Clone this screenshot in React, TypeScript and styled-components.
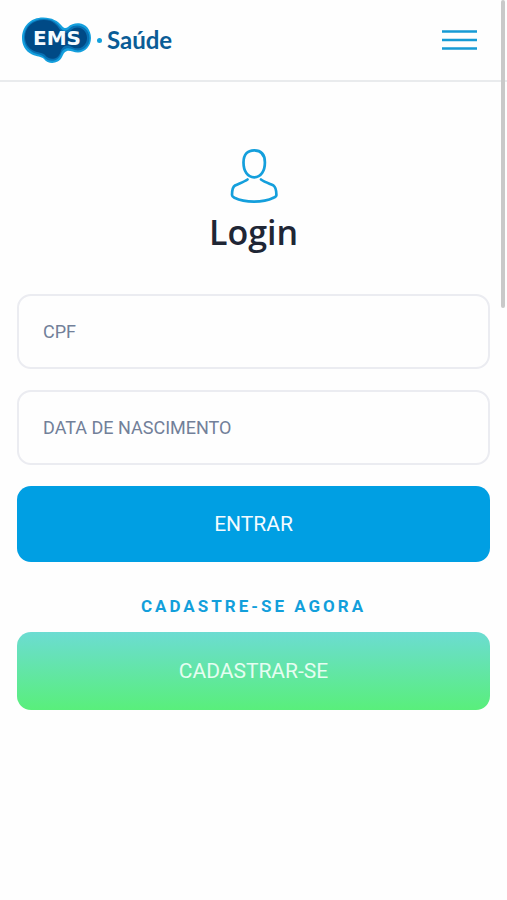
import React from "react";
import styled, { createGlobalStyle } from "styled-components";

const GlobalStyle = createGlobalStyle`
  *, *::before, *::after { box-sizing: border-box; }
  body {
    margin: 0;
    background: #fefefe;
    color: #1f2635;
    font-family: Roboto, "Liberation Sans", sans-serif;
  }
`;

const Header = styled.header`
  display: flex;
  align-items: center;
  justify-content: space-between;
  height: 82px;
  padding: 0 30px 0 20px;
  border-bottom: 2px solid #e9ebed;
`;

const Brand = styled.a`
  display: flex;
  align-items: center;
  gap: 5px;
  color: #0a5c96;
  font-family: Lato, "Liberation Sans", sans-serif;
  font-size: 24px;
  line-height: 32px;
  font-weight: 700;
  text-decoration: none;
`;

const BrandDot = styled.span`
  width: 5px;
  height: 5px;
  border-radius: 50%;
  background: #12a0dc;
`;

const MenuButton = styled.button`
  display: flex;
  padding: 0;
  border: 0;
  background: none;
  cursor: pointer;
`;

const Main = styled.main`
  display: flex;
  flex-direction: column;
  padding: 66px 17px 0;
`;

const Title = styled.h1`
  display: flex;
  flex-direction: column;
  align-items: center;
  gap: 4px;
  margin: 0 0 38px;
  font-family: "Open Sans", "Noto Sans", sans-serif;
  font-size: 34px;
  line-height: 48px;
  font-weight: 600;
`;

const Form = styled.form`
  display: flex;
  flex-direction: column;
  gap: 21px;
`;

const Field = styled.input`
  width: 100%;
  height: 75px;
  padding: 0 24px;
  border: 2px solid #ebecf1;
  border-radius: 14px;
  background: #fefefe;
  color: #1f2635;
  font-family: inherit;
  font-size: 18px;
  line-height: 24px;

  &::placeholder {
    color: #728099;
    opacity: 1;
  }
`;

const ActionButton = styled.button<{ $tone: "primary" | "signup" }>`
  width: 100%;
  height: ${({ $tone }) => ($tone === "primary" ? "76px" : "78px")};
  padding: 0;
  border: 0;
  border-radius: 14px;
  background: ${({ $tone }) =>
    $tone === "primary" ? "#009fe3" : "linear-gradient(#6cdcd2, #59ef7b)"};
  color: ${({ $tone }) => ($tone === "primary" ? "#f4fbff" : "#e6fdf1")};
  font-family: inherit;
  font-size: 21px;
  line-height: 28px;
  cursor: pointer;
`;

const SignupHeading = styled.h2`
  margin: 32px 0 14px;
  color: #129fdb;
  font-size: 17px;
  line-height: 24px;
  font-weight: 700;
  letter-spacing: 3px;
  text-align: center;
`;

const ScrollThumb = styled.div`
  position: fixed;
  top: 0;
  right: 2px;
  width: 4px;
  height: 308px;
  border-radius: 2px;
  background: #c9c9c9;
`;

const LogoText = styled.text`
  fill: #f5fbff;
  font-family: "DejaVu Sans", sans-serif;
  font-size: 20px;
  font-weight: 700;
`;

function EmsLogo() {
  return (
    <svg width="72" height="48" viewBox="0 0 72 48" role="img" aria-label="EMS">
      <path
        d="M23 1.5C32 1.500 38 5 42 10C44 12.500 46 12.500 48 11C51 8 55 7 59 7.300C66 8 71 14 71 22C71 30 65 36.500 58 36.500C53 36.500 50 34 47 35C44 36 43.500 38 42 41C38 48.500 28 48.500 24 43C21 40 17 41 12 38.500C5 35 2 29 2 22C2 10 11 1.500 23 1.500Z"
        fill="#149fdd"
      />
      <path
        d="M24 3C33 3 38 8 41 12.500C44 16 47 15 50 12C58 6 69.500 12 69.500 22C69.500 32 60 37 52 33C46 31 42 34 41 38C38 46 29 47 24 41C21 38 18 39 13 36.500C7 33 4 28 4 21.500C4 11 12 3 24 3Z"
        fill="#0871b4"
      />
      <path
        d="M24 4C33 4 37 9 40 14C43 18 48 17.500 51 14C58 8 67 13.500 67 22C67 31 58 35 51 30.500C46 28 42 31 40.500 36C38 44.500 29 44.500 25 39C22 36 18 37 14 35C8 32 5 27 5 21C5 11 13 4 24 4Z"
        fill="#004a86"
      />
      <LogoText x="37" y="29" textAnchor="middle">EMS</LogoText>
    </svg>
  );
}

function MenuIcon() {
  return (
    <svg width="35" height="20" viewBox="0 0 35 20" aria-hidden="true">
      <path d="M0 1.5H35M0 10H35M0 18.5H35" stroke="#169bd5" strokeWidth="2.6" />
    </svg>
  );
}

function UserIcon() {
  return (
    <svg
      width="48"
      height="56"
      viewBox="0 0 48 56"
      fill="none"
      stroke="#149fdc"
      strokeWidth="2.7"
      strokeLinecap="round"
      strokeLinejoin="round"
      aria-hidden="true"
    >
      <path d="M24.2 2.3C31 2.3 34.900 6.500 34.900 14.500C34.900 23 31 29.300 24.200 29.300C17.400 29.300 13.500 23 13.500 14.500C13.500 6.500 17.400 2.300 24.200 2.300Z" />
      <path d="M17.500 31.500C14 34 9 35.500 5 37.500C2.500 39 2 42 2 47C2 48.500 3 49 4.500 49.800C15 55 33 55 43.500 49.800C45.500 49 46.400 48.500 46.400 47C46.400 42 45.500 39 43.500 37.500C39 35.500 34.500 34 31 31.500" />
    </svg>
  );
}

export default function App() {
  return (
    <>
      <GlobalStyle />
      <Header>
        <Brand href="#">
          <EmsLogo />
          <BrandDot />
          Saúde
        </Brand>
        <MenuButton type="button" aria-label="Menu">
          <MenuIcon />
        </MenuButton>
      </Header>
      <Main>
        <Title>
          <UserIcon />
          Login
        </Title>
        <Form onSubmit={(event: React.FormEvent) => event.preventDefault()}>
          <Field aria-label="CPF" placeholder="CPF" inputMode="numeric" />
          <Field aria-label="DATA DE NASCIMENTO" placeholder="DATA DE NASCIMENTO" />
          <ActionButton $tone="primary" type="submit">ENTRAR</ActionButton>
        </Form>
        <SignupHeading>CADASTRE-SE AGORA</SignupHeading>
        <ActionButton $tone="signup" type="button">CADASTRAR-SE</ActionButton>
      </Main>
      <ScrollThumb />
    </>
  );
}
